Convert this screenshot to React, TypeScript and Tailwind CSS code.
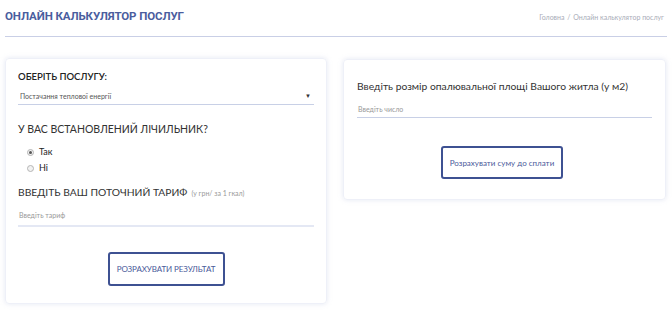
import React from "react";

export default function App() {
  return (
    <div className="w-[672px] h-[315px] bg-white overflow-hidden font-['Lato',sans-serif] text-[#333]">
      {/* header */}
      <div className="mx-[5px] flex items-center justify-between h-[37px] border-b border-[#c9cfe6] pb-[2px]">
        <h1 className="font-['Roboto',sans-serif] font-bold text-[11.5px] text-[#4a5d9e] tracking-[-0.1px]">
          ОНЛАЙН КАЛЬКУЛЯТОР ПОСЛУГ
        </h1>
        <div className="text-[7px] text-[#a9acb8] pr-[3px]">
          Головна <span className="mx-[1px]">/</span> Онлайн калькулятор послуг
        </div>
      </div>

      <div className="flex items-start gap-[16px] px-[5px] mt-[21px]">
        {/* left card */}
        <div className="w-[322px] h-[246px] rounded-[4px] border border-[#eef0f8] shadow-[0_0_5px_rgba(180,190,220,0.35)] px-[12px] pt-[12px]">
          <div className="text-[9.5px] leading-[12px] font-semibold text-[#222]">ОБЕРІТЬ ПОСЛУГУ:</div>
          <div className="mt-[8px] flex items-center justify-between border-b border-[#c8d0e6] pb-[3px] pl-[2px] pr-[3px]">
            <span className="text-[7px] leading-[10px] text-[#555]">Постачання теплової енергії</span>
            <span className="text-[6px] leading-[10px] text-[#333]">▼</span>
          </div>

          <div className="mt-[16px] text-[10.5px] leading-[16px] text-[#333]">У ВАС ВСТАНОВЛЕНИЙ ЛІЧИЛЬНИК?</div>
          <div className="mt-[9px] pl-[9px] flex flex-col gap-[4px]">
            <label className="flex items-center gap-[5px] text-[9px] leading-[12px] text-[#222]">
              <span className="w-[7px] h-[7px] rounded-full border border-[#b5b5b5] bg-[#f2f2f2] flex items-center justify-center">
                <span className="w-[3px] h-[3px] rounded-full bg-[#555]" />
              </span>
              Так
            </label>
            <label className="flex items-center gap-[5px] text-[9px] leading-[12px] text-[#222]">
              <span className="w-[7px] h-[7px] rounded-full border border-[#b5b5b5] bg-[#f2f2f2]" />
              Ні
            </label>
          </div>

          <div className="mt-[10px] flex items-baseline gap-[4px] leading-[16px]">
            <span className="text-[10.3px] text-[#333]">ВВЕДІТЬ ВАШ ПОТОЧНИЙ ТАРИФ</span>
            <span className="text-[7px] text-[#999]">(у грн/ за 1 гкал)</span>
          </div>
          <div className="mt-[9px] border-b-2 border-[#e4e8f4] pb-[5px] pl-[1px] text-[7px] leading-[10px] text-[#999]">
            Введіть тариф
          </div>

          <div className="flex justify-center mt-[25px]">
            <button className="w-[117px] h-[34px] border-2 border-[#3e5192] rounded-[3px] text-[8px] text-[#4a5a9a] tracking-[-0.1px]">
              РОЗРАХУВАТИ РЕЗУЛЬТАТ
            </button>
          </div>
        </div>

        {/* right card */}
        <div className="w-[323px] h-[141px] mt-[1px] rounded-[4px] border border-[#eef0f8] shadow-[0_0_5px_rgba(180,190,220,0.35)] px-[13px] pt-[18px]">
          <div className="text-[10.3px] leading-[16px] text-[#333] whitespace-nowrap">
            Введіть розмір опалювальної площі Вашого житла (у м2)
          </div>
          <div className="mt-[10px] border-b border-[#c8d0e6] pb-[3px] pl-[1px] text-[7px] leading-[10px] text-[#999]">Введіть число</div>
          <div className="flex justify-center mt-[28px] pr-[5px]">
            <button className="w-[122px] h-[33px] border-2 border-[#3e5192] rounded-[3px] text-[8px] text-[#4a5a9a]">
              Розрахувати суму до сплати
            </button>
          </div>
        </div>
      </div>
    </div>
  );
}
